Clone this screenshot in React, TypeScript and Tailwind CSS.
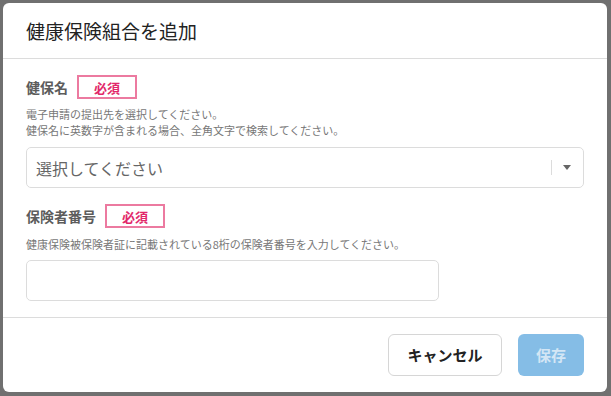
import React from 'react';

const font = { fontFamily: '"Noto Sans CJK JP", "Noto Sans", sans-serif' };

function Required() {
  return (
    <span className="inline-flex items-center justify-center w-[60px] h-[24px] border-2 border-[#ec7aa0] text-[13px] font-bold text-[#e2276a] leading-none">
      必須
    </span>
  );
}

export default function App() {
  return (
    <div className="w-[611px] h-[396px] bg-[#707070] pt-[3px] pl-[3px] pr-[4px] pb-[4px]" style={font}>
      <div className="bg-white rounded-[6px] h-full flex flex-col overflow-hidden">
        <div className="h-[56px] shrink-0 border-b border-[#dcdcdc] flex items-center px-[23px]">
          <h1 className="text-[19px] text-[#222] leading-none">健康保険組合を追加</h1>
        </div>

        <div className="px-[23px] pt-[16px] pb-[16px]">
          <div className="flex items-center gap-[9px] h-[24px]">
            <span className="text-[14px] font-bold text-[#5c5c5c]">健保名</span>
            <Required />
          </div>
          <div className="mt-[7px] text-[11px] leading-[16px] text-[#777]">
            <p>電子申請の提出先を選択してください。</p>
            <p>健保名に英数字が含まれる場合、全角文字で検索してください。</p>
          </div>
          <div className="mt-[9px] h-[41px] border border-[#dcdcdc] rounded-[5px] flex items-center pl-[9px] pr-[12px]">
            <span className="flex-1 text-[16px] text-[#666]">選択してください</span>
            <span className="w-px h-[15px] bg-[#dcdcdc]" />
            <svg width="8" height="5" viewBox="0 0 8 5" className="ml-[11px]">
              <path d="M0 0 L8 0 L4 5 Z" fill="#666" />
            </svg>
          </div>

          <div className="mt-[16px] flex items-center gap-[9px] h-[24px]">
            <span className="text-[14px] font-bold text-[#5c5c5c]">保険者番号</span>
            <Required />
          </div>
          <p className="mt-[8px] text-[11px] leading-[16px] text-[#777]">
            健康保険被保険者証に記載されている8桁の保険者番号を入力してください。
          </p>
          <div className="mt-[8px] w-[413px] h-[41px] border border-[#dcdcdc] rounded-[5px]" />
        </div>

        <div className="border-t border-[#dcdcdc] px-[23px] pt-[16px] flex justify-end gap-[16px]">
          <button className="h-[42px] w-[114px] border border-[#d6d6d6] rounded-[6px] bg-white text-[15px] font-bold text-[#222]">
            キャンセル
          </button>
          <button className="h-[42px] w-[66px] rounded-[6px] bg-[#85bde6] text-[15px] font-bold text-[#d3e6f5]">
            保存
          </button>
        </div>
      </div>
    </div>
  );
}
